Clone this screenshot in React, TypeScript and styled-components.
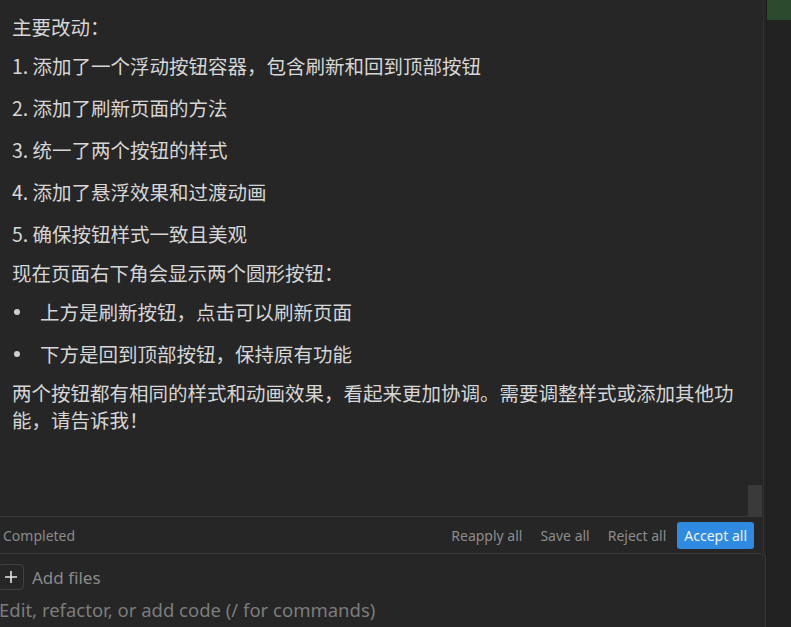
import React from "react";
import styled, { createGlobalStyle } from "styled-components";

const Global = createGlobalStyle`
  html, body { margin: 0; padding: 0; background: #262626; }
  body { width: 791px; height: 627px; overflow: hidden; }
`;

const cjk = `"Noto Sans CJK SC", "Noto Sans", sans-serif`;
const ui = `"Noto Sans", "Open Sans", sans-serif`;

const Page = styled.div`
  display: flex;
  width: 791px;
  height: 627px;
  background: #262626;
  overflow: hidden;
`;

const Panel = styled.div`
  width: 766px;
  flex-shrink: 0;
  display: flex;
  flex-direction: column;
  border-right: 1px solid #1d1d1d;
`;

const Upper = styled.div`
  width: 763px;
  border-right: 1px solid #303030;
  display: flex;
  flex-direction: column;
`;

const Messages = styled.div`
  position: relative;
  height: 516px;
  box-sizing: border-box;
  padding: 13px 20px 0 12px;
  display: flex;
  flex-direction: column;
  gap: 12px;
  font-family: ${cjk};
  font-size: 19.5px;
  line-height: 27px;
  color: #d6d6d6;
`;

const P = styled.p`
  margin: 0;
`;

const List = styled.div`
  display: flex;
  flex-direction: column;
  gap: 15px;
`;

const Item = styled.div<{ $bullet?: boolean }>`
  display: flex;
  align-items: center;
  padding-left: ${(p) => (p.$bullet ? "2px" : "0")};
`;

const Dot = styled.span`
  width: 6px;
  height: 6px;
  border-radius: 50%;
  background: #cfcfcf;
  margin-right: 20px;
  flex-shrink: 0;
`;

const Thumb = styled.div`
  position: absolute;
  right: 1px;
  bottom: 0;
  width: 14px;
  height: 31px;
  background: #3a3a3a;
`;

const Status = styled.div`
  height: 36px;
  border-top: 1px solid #393939;
  display: flex;
  align-items: center;
  justify-content: space-between;
  padding: 0 9px 0 3px;
  font-family: ${ui};
  font-size: 14px;
  color: #8a8a8a;
`;

const Actions = styled.div`
  display: flex;
  align-items: center;
  gap: 4px;
`;

const ActionBtn = styled.span<{ $primary?: boolean }>`
  padding: 0 7px;
  height: 27px;
  display: flex;
  align-items: center;
  border-radius: 3px;
  color: ${(p) => (p.$primary ? "#eef4fc" : "#8c8c8c")};
  background: ${(p) => (p.$primary ? "#2f8ae2" : "transparent")};
`;

const InputBox = styled.div`
  flex: 1;
  margin-left: -8px;
  border: 1px solid #393939;
  border-bottom: none;
  border-radius: 6px 6px 0 0;
  padding: 10px 0 0 5px;
  font-family: ${ui};
  color: #8a8a8a;
`;

const FilesRow = styled.div`
  display: flex;
  align-items: center;
  gap: 8px;
  font-size: 17px;
`;

const PlusBtn = styled.div`
  width: 24px;
  height: 24px;
  border: 1px solid #404040;
  border-radius: 4px;
  display: flex;
  align-items: center;
  justify-content: center;
  color: #e0e0e0;
`;

const Placeholder = styled.div`
  margin-top: 8px;
  margin-left: 1px;
  font-size: 18.5px;
  line-height: 24px;
  color: #7c7c7c;
  white-space: nowrap;
`;

const Strip = styled.div`
  flex: 1;
  background: #222222;
`;

const GreenBlock = styled.div`
  height: 20px;
  background: #2c4a2d;
`;

export default function App() {
  return (
    <>
      <Global />
      <Page>
        <Panel>
          <Upper>
            <Messages>
              <P>主要改动：</P>
              <List>
                <Item>1. 添加了一个浮动按钮容器，包含刷新和回到顶部按钮</Item>
                <Item>2. 添加了刷新页面的方法</Item>
                <Item>3. 统一了两个按钮的样式</Item>
                <Item>4. 添加了悬浮效果和过渡动画</Item>
                <Item>5. 确保按钮样式一致且美观</Item>
              </List>
              <P>现在页面右下角会显示两个圆形按钮：</P>
              <List>
                <Item $bullet>
                  <Dot />
                  上方是刷新按钮，点击可以刷新页面
                </Item>
                <Item $bullet>
                  <Dot />
                  下方是回到顶部按钮，保持原有功能
                </Item>
              </List>
              <P>
                两个按钮都有相同的样式和动画效果，看起来更加协调。需要调整样式或添加其他功能，请告诉我！
              </P>
              <Thumb />
            </Messages>
            <Status>
              <span>Completed</span>
              <Actions>
                <ActionBtn>Reapply all</ActionBtn>
                <ActionBtn>Save all</ActionBtn>
                <ActionBtn>Reject all</ActionBtn>
                <ActionBtn $primary>Accept all</ActionBtn>
              </Actions>
            </Status>
          </Upper>
          <InputBox>
            <FilesRow>
              <PlusBtn>
                <svg width="14" height="14" viewBox="0 0 14 14">
                  <path d="M7 1v12M1 7h12" stroke="#e6e6e6" strokeWidth="1.6" />
                </svg>
              </PlusBtn>
              <span>Add files</span>
            </FilesRow>
            <Placeholder>Edit, refactor, or add code (/ for commands)</Placeholder>
          </InputBox>
        </Panel>
        <Strip>
          <GreenBlock />
        </Strip>
      </Page>
    </>
  );
}
